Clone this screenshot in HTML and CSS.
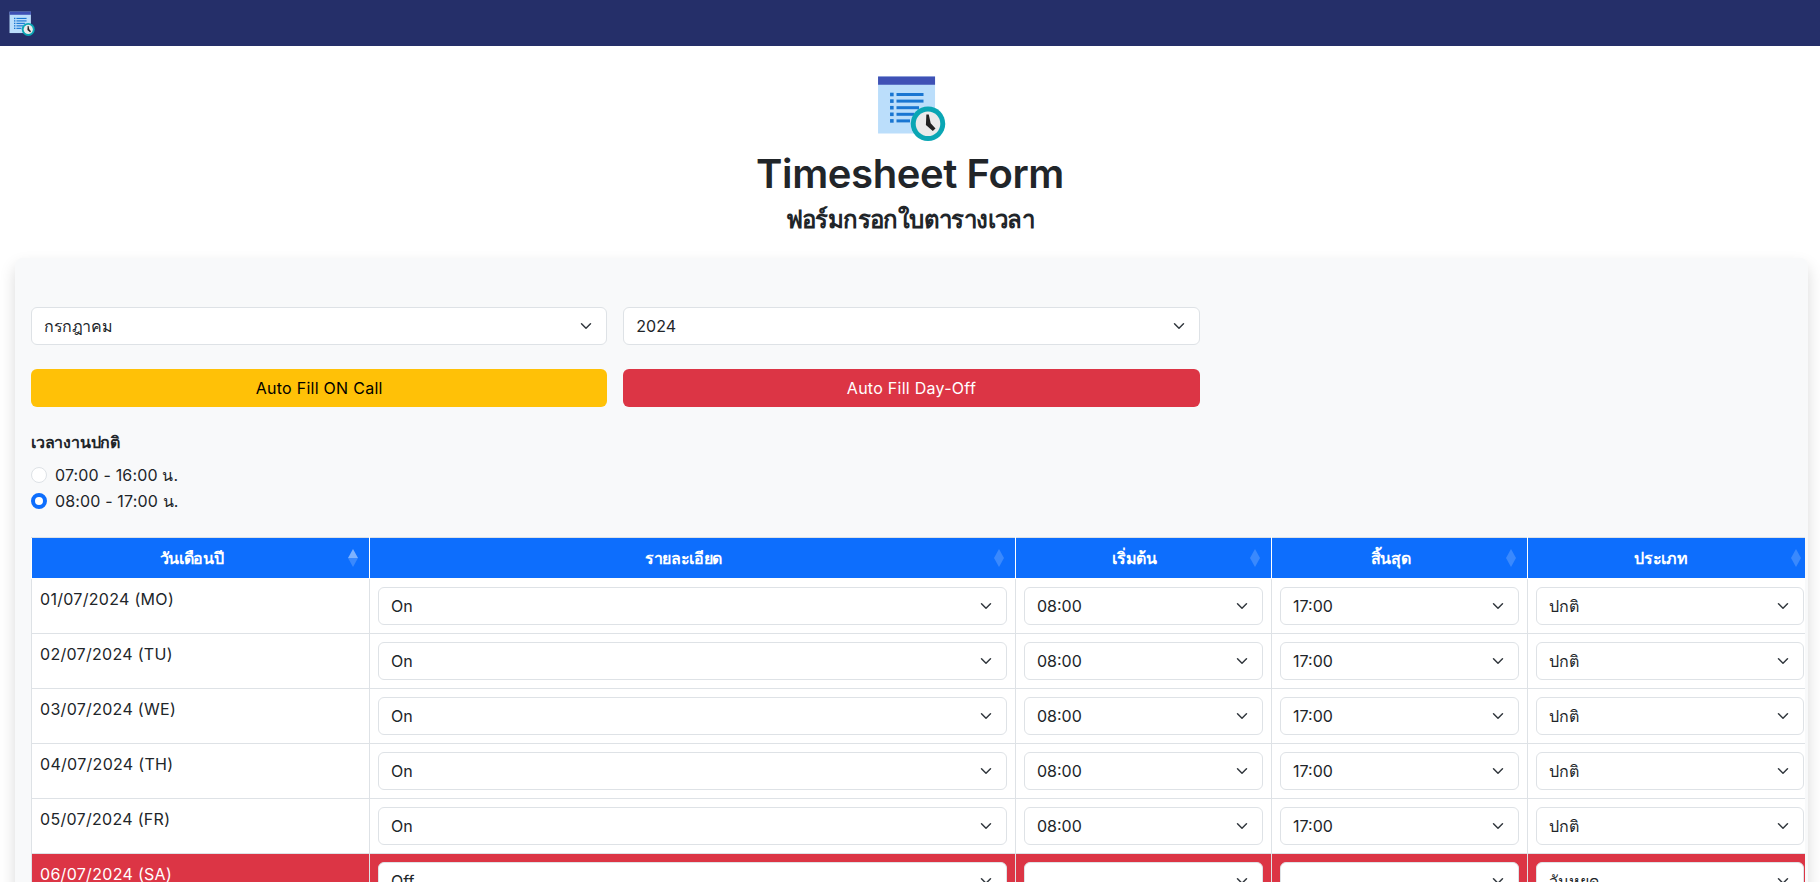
FILE: index.html
```html
<!DOCTYPE html>
<html>
<head>
    <title>Timesheet Form</title>
    <link rel="stylesheet" href="styles.css">
</head>
<body>

<svg class="icon-defs" width="0" height="0">
    <symbol id="timesheet" viewBox="0 0 48 48">
        <rect x="2.7" y="3" width="38" height="38" fill="#bbdefb"/>
        <rect x="2.7" y="3" width="38" height="5.5" fill="#3f51b5"/>
        <g fill="#1976d2">
            <rect x="10.7" y="13.8" width="2.4" height="2.4"/>
            <rect x="10.7" y="18.2" width="2.4" height="2.4"/>
            <rect x="10.7" y="22.6" width="2.4" height="2.4"/>
            <rect x="10.7" y="27" width="2.4" height="2.4"/>
            <rect x="10.7" y="31.4" width="2.4" height="2.4"/>
            <rect x="15" y="14" width="18" height="2"/>
            <rect x="15" y="18.4" width="18" height="2"/>
            <rect x="15" y="22.8" width="15" height="2"/>
            <rect x="15" y="27.2" width="12" height="2"/>
            <rect x="15" y="31.6" width="9" height="2"/>
        </g>
        <circle cx="36" cy="34.5" r="11.5" fill="#0aa6b4"/>
        <circle cx="36" cy="34.5" r="8.2" fill="#eaeaea"/>
        <path d="M34.9 28.3h1.6l1.3 5.9 3.2 3.4-1.8 1.8-4.6-4z" fill="#212121"/>
    </symbol>
</svg>

<nav class="navbar">
    <svg class="navbar-logo"><use href="#timesheet"/></svg>
</nav>

<header class="page-head">
    <svg class="page-logo"><use href="#timesheet"/></svg>
    <h1>Timesheet Form</h1>
    <h2>ฟอร์มกรอกใบตารางเวลา</h2>
</header>

<main class="card">
    <div class="form-row">
        <select class="form-select month-select"><option>กรกฎาคม</option></select>
        <select class="form-select"><option>2024</option></select>
    </div>
    <div class="form-row">
        <button class="btn btn-warning">Auto Fill ON Call</button>
        <button class="btn btn-danger">Auto Fill Day-Off</button>
    </div>

    <div class="shift-label">เวลางานปกติ</div>
    <label class="form-check"><input type="radio" name="shift"> 07:00 - 16:00 น.</label>
    <label class="form-check"><input type="radio" name="shift" checked> 08:00 - 17:00 น.</label>

    <div class="table-wrap">
        <table>
            <colgroup>
                <col class="col-date">
                <col class="col-detail">
                <col class="col-start">
                <col class="col-end">
                <col class="col-type">
            </colgroup>
            <thead>
                <tr>
                    <th class="sorted">วันเดือนปี</th>
                    <th>รายละเอียด</th>
                    <th>เริ่มต้น</th>
                    <th>สิ้นสุด</th>
                    <th>ประเภท</th>
                </tr>
            </thead>
            <tbody>
                <tr>
                    <td>01/07/2024 (MO)</td>
                    <td><select class="form-select"><option>On</option></select></td>
                    <td><select class="form-select"><option>08:00</option></select></td>
                    <td><select class="form-select"><option>17:00</option></select></td>
                    <td><select class="form-select"><option>ปกติ</option></select></td>
                </tr>
                <tr>
                    <td>02/07/2024 (TU)</td>
                    <td><select class="form-select"><option>On</option></select></td>
                    <td><select class="form-select"><option>08:00</option></select></td>
                    <td><select class="form-select"><option>17:00</option></select></td>
                    <td><select class="form-select"><option>ปกติ</option></select></td>
                </tr>
                <tr>
                    <td>03/07/2024 (WE)</td>
                    <td><select class="form-select"><option>On</option></select></td>
                    <td><select class="form-select"><option>08:00</option></select></td>
                    <td><select class="form-select"><option>17:00</option></select></td>
                    <td><select class="form-select"><option>ปกติ</option></select></td>
                </tr>
                <tr>
                    <td>04/07/2024 (TH)</td>
                    <td><select class="form-select"><option>On</option></select></td>
                    <td><select class="form-select"><option>08:00</option></select></td>
                    <td><select class="form-select"><option>17:00</option></select></td>
                    <td><select class="form-select"><option>ปกติ</option></select></td>
                </tr>
                <tr>
                    <td>05/07/2024 (FR)</td>
                    <td><select class="form-select"><option>On</option></select></td>
                    <td><select class="form-select"><option>08:00</option></select></td>
                    <td><select class="form-select"><option>17:00</option></select></td>
                    <td><select class="form-select"><option>ปกติ</option></select></td>
                </tr>
                <tr class="day-off">
                    <td>06/07/2024 (SA)</td>
                    <td><select class="form-select"><option>Off</option></select></td>
                    <td><select class="form-select"><option></option></select></td>
                    <td><select class="form-select"><option></option></select></td>
                    <td><select class="form-select"><option>วันหยุด</option></select></td>
                </tr>
            </tbody>
        </table>
    </div>
</main>

</body>
</html>
```

FILE: styles.css
```css
html, body {
    height: 100%;
    overflow: hidden;
}
body {
    margin: 0;
    font-family: 'Inter', 'Noto Sans', sans-serif;
    font-size: 16px;
    line-height: 24px;
    color: #212529;
    background-color: #fff;
}
.icon-defs {
    display: block;
    height: 0;
}
.navbar {
    display: flex;
    align-items: center;
    height: 46px;
    padding: 0 8px;
    box-sizing: border-box;
    background-color: #252f69;
}
.navbar-logo {
    width: 27px;
    height: 27px;
}
.page-head {
    display: flex;
    flex-direction: column;
    align-items: center;
    padding-top: 26px;
    height: 212px;
    box-sizing: border-box;
}
.page-logo {
    width: 72px;
    height: 72px;
}
h1 {
    margin: 6px 0 0;
    font-size: 40px;
    line-height: 48px;
    font-weight: 600;
    letter-spacing: -0.4px;
}
h2 {
    margin: 7px 0 0;
    font-size: 24px;
    line-height: 29px;
    font-weight: 600;
    letter-spacing: -0.6px;
}
.card {
    margin: 0 12px 0 15px;
    padding: 49px 16px 16px;
    background-color: #f8f9fa;
    border-radius: 8px;
    box-shadow: 0 8px 16px rgba(0, 0, 0, 0.15);
}
.form-row {
    display: grid;
    grid-template-columns: repeat(3, 1fr);
    gap: 16px;
    margin-bottom: 24px;
}
.form-select {
    display: block;
    width: 100%;
    height: 38px;
    padding: 6px 36px 6px 12px;
    font: inherit;
    color: #212529;
    background-color: #fff;
    background-image: url("data:image/svg+xml,%3csvg xmlns='http://www.w3.org/2000/svg' viewBox='0 0 16 16'%3e%3cpath fill='none' stroke='%23343a40' stroke-linecap='round' stroke-linejoin='round' stroke-width='2' d='m2 5 6 6 6-6'/%3e%3c/svg%3e");
    background-repeat: no-repeat;
    background-position: right 12px center;
    background-size: 16px 12px;
    border: 1px solid #dee2e6;
    border-radius: 6px;
    appearance: none;
}
.month-select {
    letter-spacing: -0.4px;
}
.btn {
    height: 38px;
    font: inherit;
    letter-spacing: 0.27px;
    border: none;
    border-radius: 6px;
    cursor: pointer;
}
.btn-warning {
    background-color: #ffc107;
    color: #000;
}
.btn-danger {
    background-color: #dc3545;
    color: #fff;
}
.shift-label {
    margin-top: -1px;
    margin-bottom: 9px;
    font-weight: 600;
    letter-spacing: -0.2px;
}
.form-check {
    display: flex;
    align-items: center;
    gap: 8px;
    height: 24px;
    margin-bottom: 2px;
    letter-spacing: 0.15px;
}
.form-check input {
    width: 16px;
    height: 16px;
    margin: 0;
    background-color: #fff;
    border: 1px solid #dee2e6;
    border-radius: 50%;
    appearance: none;
}
.form-check input:checked {
    border: 4px solid #0d6efd;
}
.table-wrap {
    margin-top: 24px;
    margin-right: -13px;
    overflow: hidden;
}
table {
    width: 1781px;
    table-layout: fixed;
    border-collapse: collapse;
    background-color: #fff;
}
.col-date { width: 338px; }
.col-detail { width: 646px; }
.col-start { width: 256px; }
.col-end { width: 256px; }
.col-type { width: 285px; }
th, td {
    padding: 8px;
    border: 1px solid #dee2e6;
    vertical-align: top;
    text-align: left;
    letter-spacing: 0.3px;
}
th {
    position: relative;
    padding-right: 26px;
    background-color: #0d6efd;
    color: #fff;
    font-weight: 600;
    text-align: center;
    letter-spacing: -0.3px;
    border-color: #fff;
    border-top-color: #dee2e6;
}
th::before, th::after {
    content: '';
    position: absolute;
    right: 11px;
    border-left: 5px solid transparent;
    border-right: 5px solid transparent;
    opacity: 0.19;
}
th::before {
    top: 11px;
    border-bottom: 9px solid #fff;
}
th::after {
    top: 20px;
    border-top: 9px solid #fff;
}
th.sorted::before {
    opacity: 0.47;
}
.day-off td {
    background-color: #dc3545;
    color: #fff;
}
```
